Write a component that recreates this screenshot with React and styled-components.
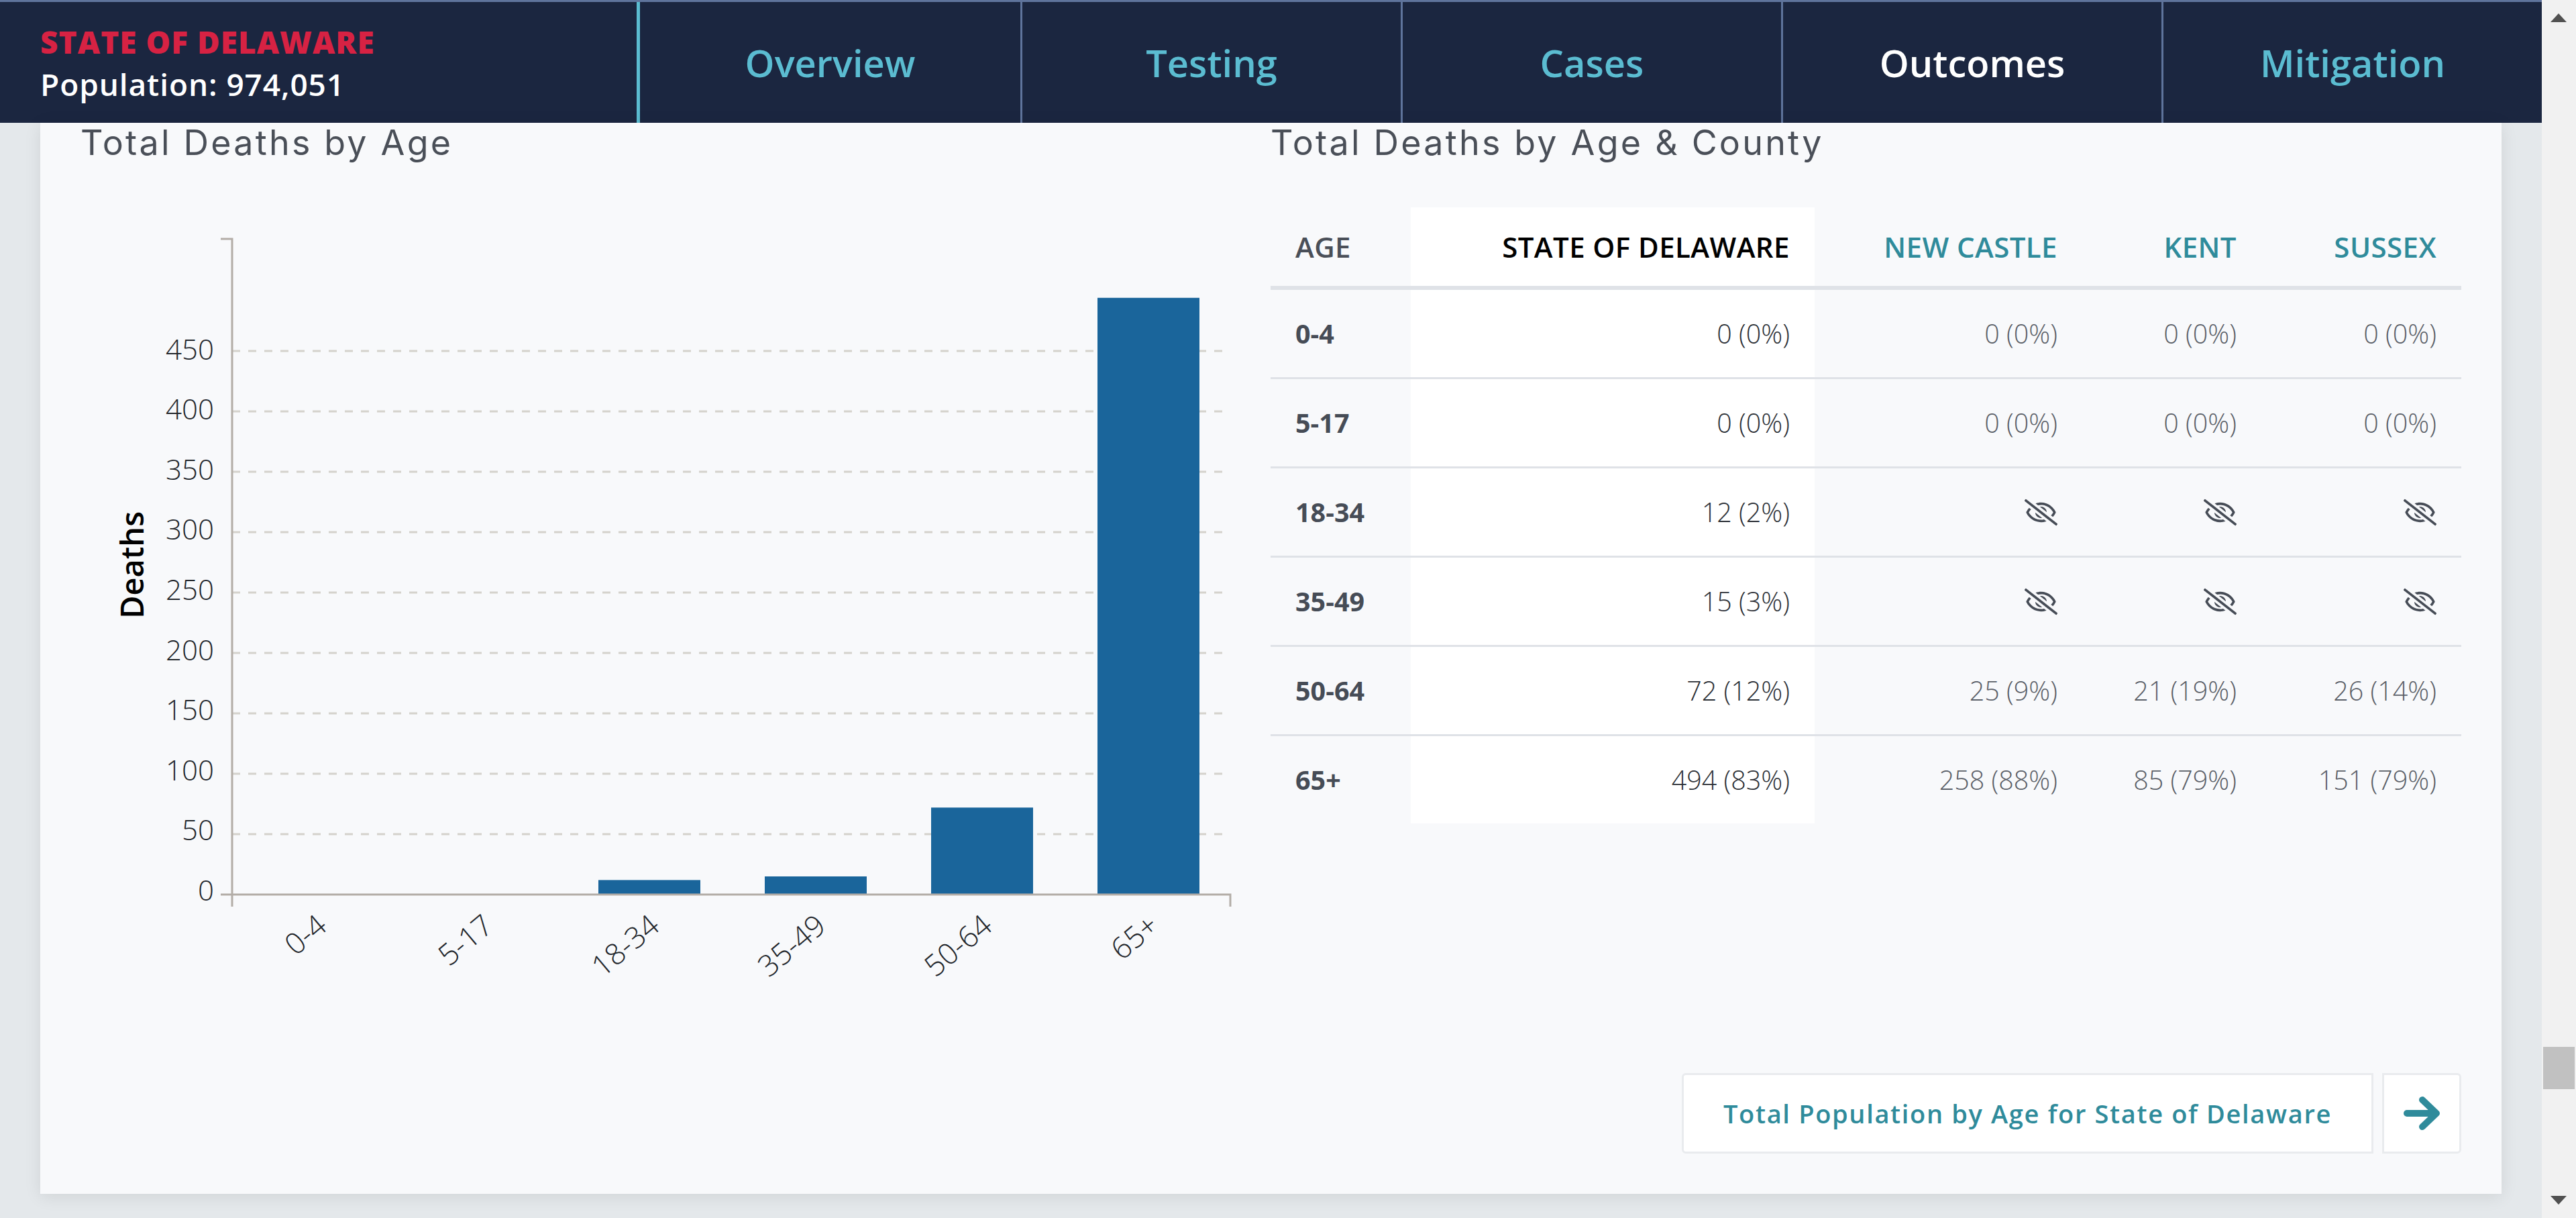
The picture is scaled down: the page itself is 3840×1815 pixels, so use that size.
import React from 'react';
import styled, { createGlobalStyle } from 'styled-components';
import { FaRegEyeSlash } from 'react-icons/fa';

const GlobalStyle = createGlobalStyle`
  * { box-sizing: border-box; }
  html, body { margin: 0; height: 100%; overflow: hidden; }
  body { font-family: 'Open Sans', 'Liberation Sans', sans-serif; background: #e4e8eb; }
`;

const Page = styled.div`
  display: flex;
  width: 3840px;
  height: 1815px;
`;

const Main = styled.div`
  flex: 1;
  min-width: 0;
  display: flex;
  flex-direction: column;
`;

const Nav = styled.nav`
  height: 183px;
  display: flex;
  background: #1b2640;
  border-top: 3px solid #5f749c;
`;

const Region = styled.div`
  flex: 1;
  padding: 33px 0 0 60px;
  border-right: 5px solid #5bbcd1;
`;

const RegionName = styled.div`
  font-size: 46px;
  line-height: 52px;
  font-weight: 800;
  color: #d72243;
  letter-spacing: 1px;
`;

const RegionPop = styled.div`
  margin-top: 6px;
  font-size: 46px;
  line-height: 62px;
  font-weight: 600;
  letter-spacing: 0.9px;
  color: #fff;
`;

const Tab = styled.a`
  flex: 0 0 567px;
  display: flex;
  align-items: center;
  justify-content: center;
  font-size: 56px;
  font-weight: 600;
  color: ${(p) => (p.$active ? '#fff' : '#5bbcd1')};
  & + & { border-left: 3px solid #5f749c; }
`;

const Content = styled.div`
  flex: 1;
  padding: 0 60px 36px;
`;

const Card = styled.section`
  height: 100%;
  padding: 0 60px 60px;
  display: flex;
  flex-direction: column;
  background: #f8f9fb;
  box-shadow: 0 4px 24px rgba(0, 0, 0, 0.09);
`;

const Columns = styled.div`
  display: grid;
  grid-template-columns: 1774px 1775px;
`;

const Title = styled.h2`
  margin: 0 0 66px;
  font-family: Inter, 'Open Sans', sans-serif;
  font-size: 52px;
  line-height: 60px;
  font-weight: 400;
  letter-spacing: 3.2px;
  color: #4a4f58;
`;

const ChartSvg = styled.svg`
  display: block;
  width: 1774px;
  height: 1150px;
`;

const AxisText = styled.text`
  font-family: 'Open Sans', sans-serif;
  font-size: ${(p) => (p.$x ? 44 : 42)}px;
  font-weight: 300;
  fill: #22262b;
`;

const AxisTitle = styled.text`
  font-family: 'Open Sans', sans-serif;
  font-size: 47px;
  font-weight: 600;
  fill: #000;
`;

const Table = styled.table`
  width: 1775px;
  table-layout: fixed;
  border-collapse: separate;
  border-spacing: 0;
  font-size: 39.5px;
`;

const Head = styled.th`
  height: 123px;
  padding: 0 37px;
  border-bottom: 6px solid #dfe2e7;
  font-size: 42px;
  font-weight: 600;
  letter-spacing: 0.43px;
  text-align: ${(p) => (p.$left ? 'left' : 'right')};
  color: ${(p) => (p.$left ? '#4a4f58' : p.$state ? '#000' : '#2f8b9b')};
  background: ${(p) => (p.$state ? '#fff' : 'transparent')};
`;

const Cell = styled.td`
  height: 133px;
  padding: 0 37px;
  border-bottom: 3px solid #dfe2e7;
  text-align: ${(p) => (p.$left ? 'left' : 'right')};
  font-weight: ${(p) => (p.$left ? 700 : 300)};
  color: ${(p) => (p.$left ? '#464c56' : p.$state ? '#2c3036' : '#5b6068')};
  background: ${(p) => (p.$state ? '#fff' : 'transparent')};
  tr:last-child > & { height: 130px; border-bottom: 0; }
  svg { display: block; margin-left: auto; color: #464c56; }
`;

const Actions = styled.div`
  margin-top: auto;
  display: flex;
  justify-content: flex-end;
  gap: 13px;
`;

const ActionButton = styled.a`
  height: 120px;
  display: flex;
  align-items: center;
  justify-content: center;
  background: #fff;
  border: 3px solid #e9ebee;
  border-radius: ${(p) => (p.$icon ? '0 6px 6px 0' : '6px 0 0 6px')};
  width: ${(p) => (p.$icon ? '118px' : '1031px')};
  font-size: 38px;
  font-weight: 600;
  letter-spacing: 1.66px;
  color: #2f8b9b;
`;

const Scrollbar = styled.aside`
  width: 51px;
  position: relative;
  background: #f1f1f1;
`;

const ScrollArrow = styled.div`
  position: absolute;
  left: 13px;
  ${(p) => (p.$down ? 'top: 1782px;' : 'top: 20px;')}
  width: 0;
  height: 0;
  border-left: 12.5px solid transparent;
  border-right: 12.5px solid transparent;
  ${(p) => (p.$down ? 'border-top: 13px solid #505050;' : 'border-bottom: 13px solid #505050;')}
`;

const ScrollThumb = styled.div`
  position: absolute;
  left: 2px;
  top: 1560px;
  width: 47px;
  height: 63px;
  background: #c1c1c1;
`;

const tabs = ['Overview', 'Testing', 'Cases', 'Outcomes', 'Mitigation'];
const ticks = [0, 50, 100, 150, 200, 250, 300, 350, 400, 450];
const bars = [
  ['0-4', 0],
  ['5-17', 0],
  ['18-34', 12],
  ['35-49', 15],
  ['50-64', 72],
  ['65+', 494],
];

const rows = [
  ['0-4', '0 (0%)', '0 (0%)', '0 (0%)', '0 (0%)'],
  ['5-17', '0 (0%)', '0 (0%)', '0 (0%)', '0 (0%)'],
  ['18-34', '12 (2%)', null, null, null],
  ['35-49', '15 (3%)', null, null, null],
  ['50-64', '72 (12%)', '25 (9%)', '21 (19%)', '26 (14%)'],
  ['65+', '494 (83%)', '258 (88%)', '85 (79%)', '151 (79%)'],
];

// coordinates in the viewBox are the same as page coordinates
const AXIS_X = 346;
const BASE_Y = 1333;
const BAND = 248;
const AXIS = '#b3ada7';

function Chart() {
  return (
    <ChartSvg viewBox="120 309 1774 1150">
      {ticks.slice(1).map((t) => (
        <line key={t} x1={AXIS_X} x2={1834} y1={BASE_Y - t * 1.8} y2={BASE_Y - t * 1.8} stroke="#d4d2cc" strokeWidth="3" strokeDasharray="12 12" />
      ))}
      {bars.map(([label, value], i) => (
        <rect key={label} x={AXIS_X + i * BAND + 50} y={BASE_Y - value * 1.8} width="152" height={value * 1.8} fill="#1a659b" />
      ))}
      <path d={`M329 356H${AXIS_X}V1351M329 ${BASE_Y}H1834V1351`} fill="none" stroke={AXIS} strokeWidth="3" />
      {ticks.map((t, i) => (
        <AxisText key={t} x="319" y={1342 - i * 89.6} textAnchor="end">{t}</AxisText>
      ))}
      {bars.map(([label], i) => {
        const x = AXIS_X + i * BAND + 144;
        return (
          <AxisText $x key={label} x={x} y="1384" textAnchor="end" transform={`rotate(-40 ${x} 1384)`}>{label}</AxisText>
        );
      })}
      <AxisTitle x="214" y="842" textAnchor="middle" transform="rotate(-90 214 842)">Deaths</AxisTitle>
    </ChartSvg>
  );
}

function ArrowIcon() {
  return (
    <svg width="54" height="52" viewBox="0 0 54 52">
      <path d="M5 26H48M28 6L49 26L28 46" fill="none" stroke="#2f8b9b" strokeWidth="10" strokeLinecap="round" strokeLinejoin="round" />
    </svg>
  );
}

export default function App() {
  return (
    <Page>
      <GlobalStyle />
      <Main>
        <Nav>
          <Region>
            <RegionName>STATE OF DELAWARE</RegionName>
            <RegionPop>Population: 974,051</RegionPop>
          </Region>
          {tabs.map((t) => (
            <Tab key={t} $active={t === 'Outcomes'}>{t}</Tab>
          ))}
        </Nav>
        <Content>
          <Card>
            <Columns>
              <div>
                <Title>Total Deaths by Age</Title>
                <Chart />
              </div>
              <div>
                <Title>Total Deaths by Age &amp; County</Title>
                <Table>
                  <colgroup>
                    <col width="209" />
                    <col width="602" />
                    <col width="399" />
                    <col width="267" />
                    <col width="298" />
                  </colgroup>
                  <thead>
                    <tr>
                      <Head $left>AGE</Head>
                      <Head $state>STATE OF DELAWARE</Head>
                      <Head>NEW CASTLE</Head>
                      <Head>KENT</Head>
                      <Head>SUSSEX</Head>
                    </tr>
                  </thead>
                  <tbody>
                    {rows.map(([age, state, ...counties]) => (
                      <tr key={age}>
                        <Cell $left>{age}</Cell>
                        <Cell $state>{state}</Cell>
                        {counties.map((c, i) => (
                          <Cell key={i}>{c || <FaRegEyeSlash size={49} />}</Cell>
                        ))}
                      </tr>
                    ))}
                  </tbody>
                </Table>
              </div>
            </Columns>
            <Actions>
              <ActionButton>Total Population by Age for State of Delaware</ActionButton>
              <ActionButton $icon><ArrowIcon /></ActionButton>
            </Actions>
          </Card>
        </Content>
      </Main>
      <Scrollbar>
        <ScrollArrow />
        <ScrollThumb />
        <ScrollArrow $down />
      </Scrollbar>
    </Page>
  );
}
